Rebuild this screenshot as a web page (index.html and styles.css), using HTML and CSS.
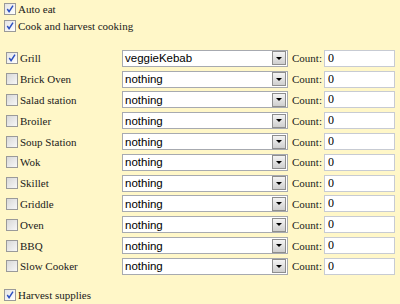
FILE: index.html
```html
<!DOCTYPE html>
<html lang="en">
<head>
  <meta charset="UTF-8">
  <title>Cooking settings</title>
  <link rel="stylesheet" href="styles.css">
</head>
<body>
  <div class="panel">
    <label class="opt"><span class="box on"><svg viewBox="0 0 11 11"><path d="M2.5 5.5 L4.5 8.5 L8.8 1.8"/></svg></span>Auto eat</label>
    <label class="opt"><span class="box on"><svg viewBox="0 0 11 11"><path d="M2.5 5.5 L4.5 8.5 L8.8 1.8"/></svg></span>Cook and harvest cooking</label>

    <div class="stations" id="stations"></div>

    <label class="opt harvest"><span class="box on"><svg viewBox="0 0 11 11"><path d="M2.5 5.5 L4.5 8.5 L8.8 1.8"/></svg></span>Harvest supplies</label>
  </div>

  <script>
    // cooking stations and what they are set to cook
    const stations = [
      { name: "Grill", on: true, recipe: "veggieKebab" },
      { name: "Brick Oven", on: false, recipe: "nothing" },
      { name: "Salad station", on: false, recipe: "nothing" },
      { name: "Broiler", on: false, recipe: "nothing" },
      { name: "Soup Station", on: false, recipe: "nothing" },
      { name: "Wok", on: false, recipe: "nothing" },
      { name: "Skillet", on: false, recipe: "nothing" },
      { name: "Griddle", on: false, recipe: "nothing" },
      { name: "Oven", on: false, recipe: "nothing" },
      { name: "BBQ", on: false, recipe: "nothing" },
      { name: "Slow Cooker", on: false, recipe: "nothing" }
    ];

    const check = '<svg viewBox="0 0 11 11"><path d="M2.5 5.5 L4.5 8.5 L8.8 1.8"/></svg>';
    const list = document.getElementById('stations');

    stations.forEach(st => {
      const row = document.createElement('div');
      row.className = 'station';
      row.innerHTML = `
        <label class="opt"><span class="box${st.on ? ' on' : ''}">${st.on ? check : ''}</span>${st.name}</label>
        <div class="dropdown"><span class="value">${st.recipe}</span><span class="btn"><i></i></span></div>
        <span class="count-label">Count:</span>
        <input class="count" type="text" value="0">
      `;
      list.appendChild(row);
    });
  </script>
</body>
</html>
```

FILE: styles.css
```css
body {
  margin: 0;
  background-color: #fff7c8;
  font-family: "Liberation Serif", "Times New Roman", serif;
  font-size: 11px;
  color: #1a1a1a;
}
.panel {
  padding: 2px 0 0 4px;
}
.opt {
  display: flex;
  align-items: center;
  height: 14px;
  margin-bottom: 3px;
}
.box {
  box-sizing: border-box;
  width: 12px;
  height: 12px;
  margin-right: 2px;
  border: 1px solid #9a9a9a;
  background: linear-gradient(135deg, #d8d8d8, #f7f7f7);
  display: flex;
}
.box.on {
  background: linear-gradient(135deg, #e4e4e4, #ffffff);
}
.box svg {
  width: 10px;
  height: 10px;
}
.box svg path {
  fill: none;
  stroke: #2a4fc0;
  stroke-width: 1.6;
}
.stations {
  margin-top: 15px;
  margin-left: 2px;
}
.station {
  display: grid;
  grid-template-columns: 116px 166px 36px 71px;
  align-items: center;
  height: 20.8px;
}
.station .opt {
  margin: 0;
}
.dropdown {
  box-sizing: border-box;
  display: flex;
  align-items: center;
  height: 17px;
  border: 1px solid #a7aab0;
  background-color: #fff;
}
.dropdown .value {
  flex: 1;
  padding-left: 2px;
  font-family: "Liberation Sans", Arial, sans-serif;
  font-size: 11.5px;
  color: #000;
}
.dropdown .btn {
  box-sizing: border-box;
  width: 14px;
  height: 14px;
  margin-right: 1px;
  border: 1px solid #8e8e8e;
  background: linear-gradient(#f4f4f4, #cfcfcf);
  display: flex;
  align-items: center;
  justify-content: center;
}
.dropdown .btn i {
  width: 0;
  height: 0;
  border-left: 3px solid transparent;
  border-right: 3px solid transparent;
  border-top: 3px solid #000;
}
.count-label {
  padding-left: 4px;
  font-size: 11px;
}
.count {
  box-sizing: border-box;
  width: 71px;
  height: 17px;
  border: 1px solid #c7cbd3;
  padding: 0 3px;
  font-family: "Liberation Serif", "Times New Roman", serif;
  font-size: 12px;
  color: #000;
  background-color: #fff;
}
.harvest {
  margin-top: 11px;
}
```
